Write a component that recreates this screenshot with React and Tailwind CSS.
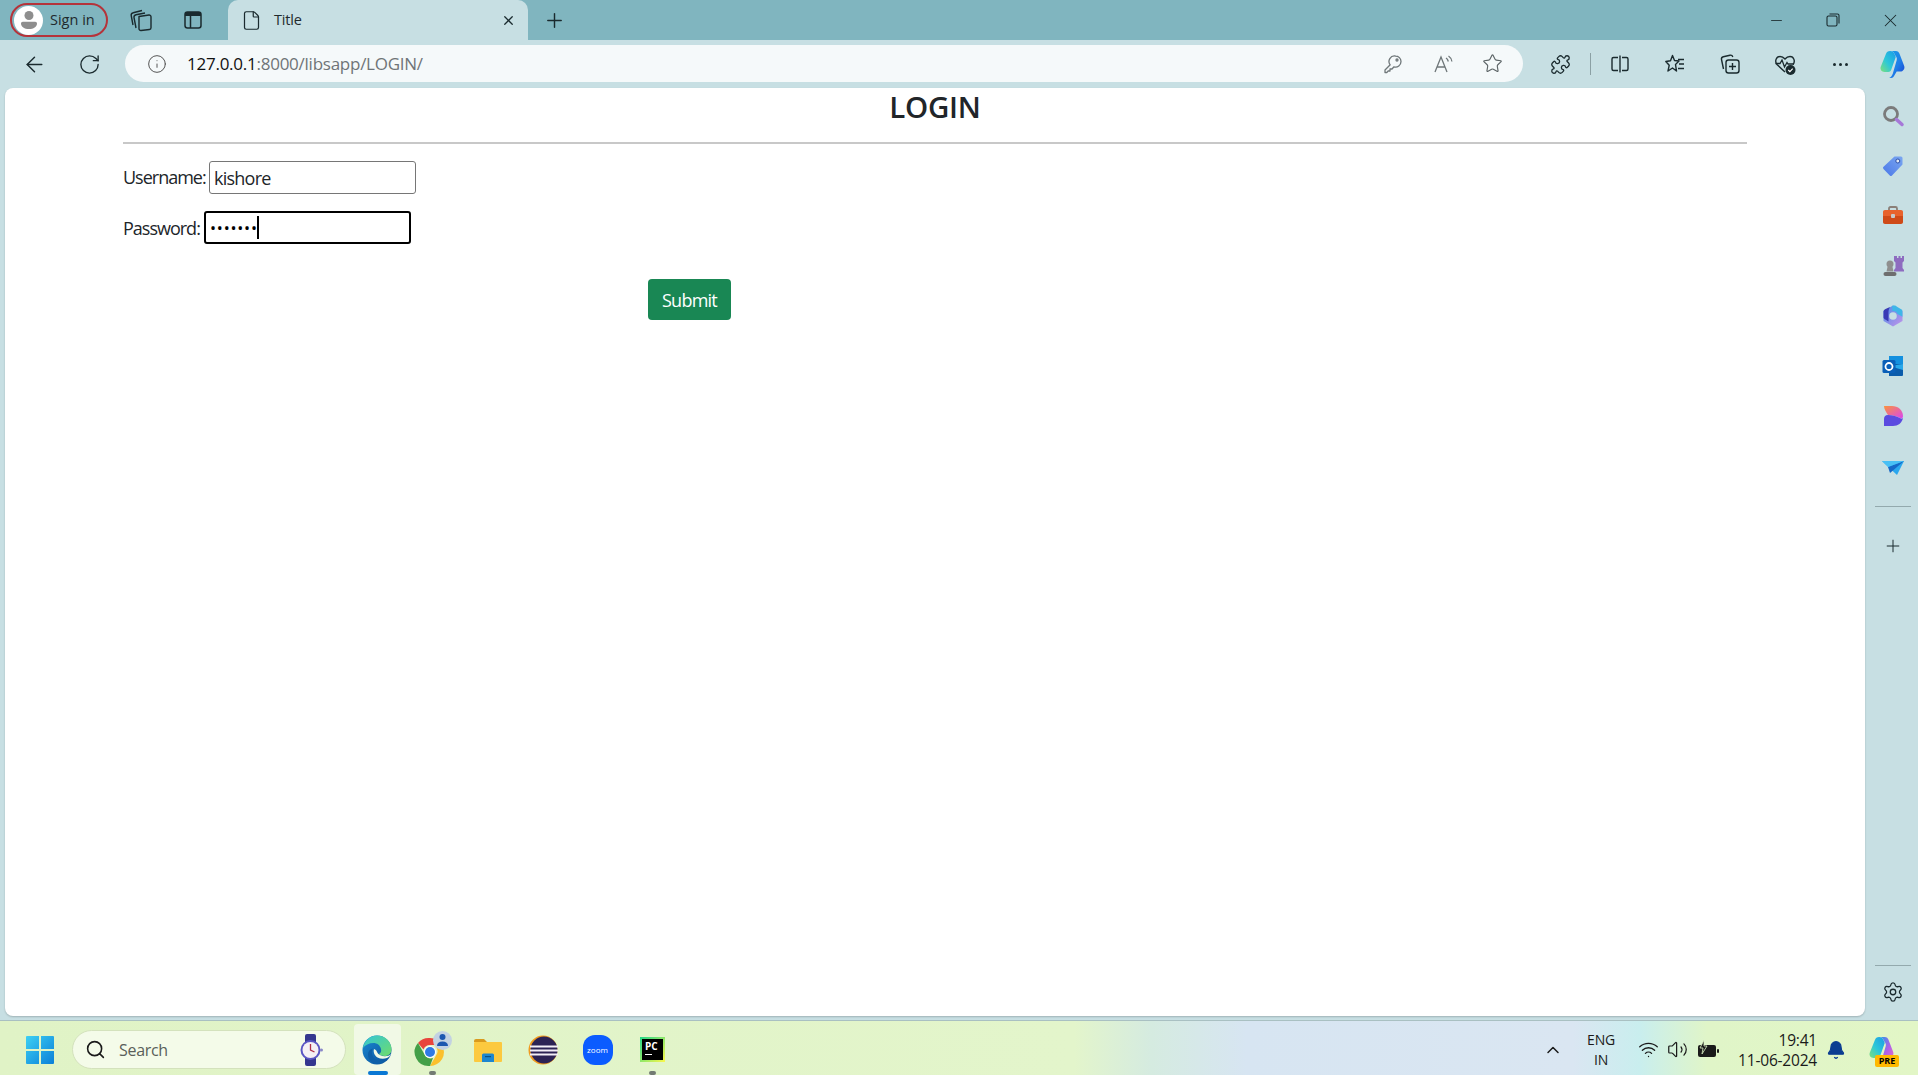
import React from "react";
import { ArrowLeft, RotateCw, Info, Star, Puzzle, Search, Plus, X, Minus, Settings, ChevronUp, Wifi, Volume2, Bell, File } from "lucide-react";

const font = "font-['Open_Sans','Noto_Sans',sans-serif]";

function Slot({ w = "w-[46px]", children, className = "" }) {
  return <div className={`${w} h-full flex items-center justify-center shrink-0 ${className}`}>{children}</div>;
}

function Copilot({ size = 30, id = "cp", right = ["#1aa0e8", "#1f7ee8", "#1a3fd0"] }) {
  return (
    <svg width={size} height={size} viewBox="0 0 32 32">
      <defs>
        <linearGradient id={`${id}a`} x1="0" y1="0" x2="1" y2="1"><stop offset="0" stopColor={right[0]} /><stop offset=".55" stopColor={right[1]} /><stop offset="1" stopColor={right[2]} /></linearGradient>
        <linearGradient id={`${id}b`} x1="0" y1="1" x2="1" y2="0"><stop offset="0" stopColor="#7fe07a" /><stop offset=".45" stopColor="#2cc8d8" /><stop offset="1" stopColor="#1a9ae8" /></linearGradient>
      </defs>
      <path d="M14 2h6c2.200 0 3.400 1.200 4 3l5 13c1 3-1 6-4.500 6H21l-3 5c-1 1.500-2.400 2-4 2h-1c2-1 3-2.500 3.800-4.500L21 12c.6-2-.2-3.500-1.500-5L18 4c-.7-1.300-2.400-2-4-2z" fill={`url(#${id}a)`} />
      <path d="M14 2c-2.400 0-3.800 1.300-4.500 3.400L4 19c-1 3 1 5.500 4 5.500h4c1.500 0 2.600-.8 3.200-2.400L20 8.500 18.500 5C17.700 3 16 2 14 2z" fill={`url(#${id}b)`} />
    </svg>
  );
}

function Workspaces() {
  return (
    <svg width="24" height="24" viewBox="0 0 24 24" fill="none" stroke="#1a2a2e" strokeWidth="1.400" strokeLinejoin="round">
      <path d="M10 8.500 20 7a1.800 1.800 0 0 1 2 1.700v11a1.800 1.800 0 0 1-1.600 1.800L12 22.500a1.800 1.800 0 0 1-2-1.800z" />
      <path d="M7 20 5 9.500C4.800 8 5.500 7 7 6.700L16 5" />
      <path d="M4 17 2.200 7.500C2 6 2.800 5 4.200 4.700L13 2.500" />
    </svg>
  );
}

function TabActions() {
  return (
    <svg width="20" height="20" viewBox="0 0 20 20" fill="none">
      <rect x="2" y="2" width="16" height="16" rx="2.500" stroke="#1a2a2e" strokeWidth="1.500" />
      <path d="M2 4.500A2.500 2.500 0 0 1 4.500 2h11A2.500 2.500 0 0 1 18 4.500V6H2z" fill="#1a2a2e" />
      <path d="M7.500 6v12" stroke="#1a2a2e" strokeWidth="1.500" />
    </svg>
  );
}

function SplitIcon() {
  return (
    <svg width="20" height="20" viewBox="0 0 20 20" fill="none" stroke="#1a2a2e" strokeWidth="1.400">
      <path d="M8 3.500H3.500A1.500 1.500 0 0 0 2 5v10a1.500 1.500 0 0 0 1.500 1.500H8" />
      <path d="M12 3.500h4.500A1.500 1.500 0 0 1 18 5v10a1.500 1.500 0 0 1-1.500 1.500H12" />
      <path d="M10 1.500v17" />
    </svg>
  );
}

function FavList() {
  return (
    <svg width="22" height="22" viewBox="0 0 22 22" fill="none" stroke="#1a2a2e" strokeWidth="1.400" strokeLinejoin="round">
      <path d="M8.500 2.500 10.500 7.500 15 8 11.500 11.500 12.500 18 8.500 15 4 18 5.200 12.300 1.800 8.500 6.500 7.800z" />
      <path d="M14 6.500h6M15 11h5M14 15.500h6" />
    </svg>
  );
}

function Collections() {
  return (
    <svg width="22" height="22" viewBox="0 0 22 22" fill="none" stroke="#1a2a2e" strokeWidth="1.400">
      <rect x="7" y="7" width="13" height="13" rx="2.500" />
      <path d="M13.500 10v7M10 13.500h7" />
      <path d="M4.500 16 2.500 6.500C2.200 5 3 4 4.300 3.700L11 2.200c1.400-.3 2.400.4 2.800 1.800" />
    </svg>
  );
}

function Health() {
  return (
    <svg width="24" height="24" viewBox="0 0 24 24" fill="none">
      <path d="M12 20 4 12.500C1.500 9.500 3 4.500 7 4.500c2.200 0 3.700 1 5 2.500 1.300-1.500 2.800-2.500 5-2.500 4 0 5.500 5 3 8" stroke="#1a2a2e" strokeWidth="1.400" />
      <path d="M2.500 11.500H7L9 8l2.500 7L14 10.500l1 1.500h6" stroke="#1a2a2e" strokeWidth="1.300" />
      <circle cx="17.500" cy="18" r="5" fill="#1a2a2e" />
      <path d="m15.300 18 1.600 1.600 2.800-3" stroke="#fff" strokeWidth="1.200" />
    </svg>
  );
}

function ReadAloud() {
  return (
    <svg width="22" height="22" viewBox="0 0 22 22" fill="none" stroke="#6f7779" strokeWidth="1.300">
      <path d="M2 19 8 4l6 15M4.200 14h7.600" />
      <path d="M13 5c1.300.8 2 2 2.300 3.500M15.500 3c1.900 1.200 3 3 3.400 5.500" />
    </svg>
  );
}

function KeyIcon() {
  return (
    <svg width="20" height="20" viewBox="0 0 20 20" fill="none" stroke="#6f7779" strokeWidth="1.300" strokeLinejoin="round">
      <path d="M12.500 2a5.500 5.500 0 0 1 5.500 5.500 5.500 5.500 0 0 1-7 5.300L9 15H7v2H5l-1 1.500H2v-2.500l5.200-5.200A5.500 5.500 0 0 1 12.500 2z" />
      <circle cx="14" cy="6" r="1" />
    </svg>
  );
}

function Avatar() {
  return (
    <div className="w-[29px] h-[29px] rounded-full bg-white flex items-center justify-center shrink-0">
      <svg width="20" height="22" viewBox="0 0 20 22">
        <circle cx="10" cy="6.500" r="4.500" fill="#8e8e8e" />
        <path d="M2 14.500c0-1 .8-1.800 1.800-1.800h12.400c1 0 1.800.8 1.800 1.800 0 3.500-3.500 5.500-8 5.500s-8-2-8-5.500z" fill="#8e8e8e" />
      </svg>
    </div>
  );
}

const sidebarIcons = [
  <svg width="24" height="24" viewBox="0 0 24 24" fill="none"><circle cx="10" cy="10" r="6.500" stroke="#7b7b7b" strokeWidth="2.800" /><path d="m15.500 15.500 5.500 5" stroke="#a678d8" strokeWidth="3.500" strokeLinecap="round" /></svg>,
  <svg width="24" height="24" viewBox="0 0 24 24"><defs><linearGradient id="sbt" x1="0" y1="1" x2="1" y2="0"><stop offset="0" stopColor="#4a78e8" /><stop offset="1" stopColor="#7aa6f0" /></linearGradient></defs><path d="M13.500 2.500H20a1.500 1.500 0 0 1 1.500 1.500v6.500L11 21.500a1.500 1.500 0 0 1-2.200 0L2.500 15a1.500 1.500 0 0 1 0-2.200z" fill="url(#sbt)" /><circle cx="16.800" cy="7" r="2" fill="#dfe8f6" stroke="#2c4fa8" /></svg>,
  <svg width="24" height="24" viewBox="0 0 24 24"><path d="M8 6V4.500A1.500 1.500 0 0 1 9.500 3h5A1.500 1.500 0 0 1 16 4.500V6" fill="none" stroke="#8a7f78" strokeWidth="1.800" /><path d="M2 8c0-1.200.8-2 2-2h16c1.200 0 2 .8 2 2v4H2z" fill="#e8622c" /><path d="M2 12h20v6c0 1.200-.8 2-2 2H4c-1.200 0-2-.8-2-2z" fill="#cf4a18" /><rect x="10" y="10" width="4" height="4" rx="1" fill="#c8c8c8" /></svg>,
  <svg width="24" height="24" viewBox="0 0 24 24"><circle cx="9" cy="10" r="3.500" fill="#8f8f8f" /><path d="M6.500 13h5l1 4.500h-7z" fill="#8f8f8f" /><rect x="2.500" y="18" width="13" height="4" rx="2" fill="#6e6e6e" /><path d="M14 2h2v2h1.500V2h2v2H21V2h2v5l-1.500 1.500V14l1.500 2v1.500H13V16l1.500-2V8.500L13 7V2z" fill="#8e6cc0" /></svg>,
  <svg width="24" height="24" viewBox="0 0 24 24" fill="none"><defs><linearGradient id="m365" x1="0" y1="0" x2="1" y2="1"><stop offset="0" stopColor="#4a8fe8" /><stop offset="1" stopColor="#c493ea" /></linearGradient></defs><path d="M12 1.500 21.500 7v10L12 22.500 2.500 17V7z" fill="url(#m365)" /><path d="M11 1.900c2.500-.8 4 0 5 .8l5 3c.6.6.5 5.300.5 7l-5-2.700c-.4-2-2.500-3.500-5-3z" fill="#3fb6e8" /><path d="M2.500 7.500c0-1 1-1.800 2-2.400L9 3c-1 2-1.500 3-1.500 5v9.500L3.500 15c-.7-.5-1-1-1-2z" fill="#3a3ab5" /><circle cx="12" cy="12" r="3.800" fill="#c7dfe3" /></svg>,
  <svg width="24" height="24" viewBox="0 0 24 24"><rect x="8" y="2" width="14" height="10" fill="#1490df" /><path d="M8 10h14v11a1 1 0 0 1-1 1H8z" fill="#0b5cab" /><path d="m8 12 14-2v6z" fill="#28a8ea" /><rect x="1.500" y="6" width="13" height="13" rx="1.500" fill="#0a5fb8" /><circle cx="8" cy="12.500" r="3.500" fill="none" stroke="#fff" strokeWidth="1.800" /></svg>,
  <svg width="24" height="24" viewBox="0 0 24 24"><defs><linearGradient id="dsg" x1="0" y1="0" x2="1" y2="1"><stop offset="0" stopColor="#fb923c" /><stop offset="1" stopColor="#d946ef" /></linearGradient></defs><path d="M3 2h8c6 0 11 4 11 10 0 2-1 3-3 2-3-2-9-3-12-3-2-3-4-6-4-9z" fill="url(#dsg)" /><path d="M3 22h9c5 0 9-3 10-8-1 1-2 1-3 0-4-2-8-3-12-3-3 0-4 2-4 4z" fill="#5b4be0" /></svg>,
  <svg width="24" height="24" viewBox="0 0 24 24"><path d="M1 7h22L16 21z" fill="#2aa7ee" /><path d="M23 7 7 13l2 6z" fill="#1668c7" /><path d="M1 7l6 6 16-6z" fill="#49c0f5" /></svg>,
];

function Edge() {
  return (
    <svg width="32" height="32" viewBox="0 0 32 32">
      <defs>
        <linearGradient id="edA" x1="0" y1="0" x2="1" y2="1"><stop offset="0" stopColor="#33c6d8" /><stop offset="1" stopColor="#6fdc6b" /></linearGradient>
        <linearGradient id="edB" x1="0" y1="0" x2="1" y2="1"><stop offset="0" stopColor="#1a8ad4" /><stop offset="1" stopColor="#0c4f98" /></linearGradient>
      </defs>
      <circle cx="16" cy="16" r="14.500" fill="url(#edB)" />
      <path d="M2 14C3 7 9 1.500 16 1.500c8 0 14.500 6 14.500 14 0 4-3 6.500-7 6.500-3 0-5-1-5.500-2 2-1 2.500-3 2-5C19 11 16 9 12.500 9 8 9 4 11 2 14z" fill="url(#edA)" />
      <path d="M12 14.500c-2 2.500-1.500 7 2 10.500 3 2.500 8 2.500 12 0-3 3.500-7 5.500-11 5-5-1-8-5-8-9.500 0-3 2-5.500 5-6z" fill="#0e5fa8" />
      <path d="M13 15c-1 3 .5 6.500 3.500 8.500 3 1.500 6.500 1.500 9.500.5 2-1 3-2 4-4-1.500 1.500-3.500 2.200-6 2.200-4 0-7-1.700-8-4.200-.6-1.300-.5-2-3-3z" fill="#f1f9e6" />
    </svg>
  );
}

function Chrome() {
  return (
    <div className="relative w-[38px] h-[38px]">
      <svg width="32" height="32" viewBox="0 0 32 32" className="absolute left-0 top-[5px]">
        <path d="M16 2a14 14 0 0 1 12.100 7H16a7 7 0 0 0-6.500 4.500L4 7a14 14 0 0 1 12-5z" fill="#e8453c" />
        <path d="M28.100 9A14 14 0 0 1 16 30l6-10.500A7 7 0 0 0 22 11z" fill="#fbc02d" />
        <path d="M4 7l6 10.500A7 7 0 0 0 19 22l-3 8A14 14 0 0 1 4 7z" fill="#43a047" />
        <circle cx="16" cy="16" r="6" fill="#fff" />
        <circle cx="16" cy="16" r="5" fill="#2f7ae5" />
      </svg>
      <div className="absolute right-0 top-0 w-[19px] h-[19px] rounded-full bg-[#c3d2e2] flex items-center justify-center">
        <svg width="13" height="14" viewBox="0 0 13 14"><circle cx="6.500" cy="4" r="3" fill="#1c57b0" /><path d="M1 13c0-3 2-4.500 5.500-4.500S12 10 12 13z" fill="#1c57b0" /></svg>
      </div>
    </div>
  );
}

function Folder() {
  return (
    <svg width="30" height="30" viewBox="0 0 30 30">
      <path d="M1 6a2 2 0 0 1 2-2h8l3 3H1z" fill="#d99a1e" />
      <rect x="1" y="7" width="28" height="20" rx="1" fill="#fcc93f" />
      <path d="M9 27v-7a1.500 1.500 0 0 1 1.500-1.500h9A1.500 1.500 0 0 1 21 20v7z" fill="#1d86cf" />
      <rect x="12" y="21" width="6" height="1.200" fill="#0b4f86" />
    </svg>
  );
}

function Eclipse() {
  return (
    <svg width="30" height="30" viewBox="0 0 30 30">
      <circle cx="15" cy="15" r="14.500" fill="#f09a1f" />
      <circle cx="16" cy="15" r="13.500" fill="#2c2255" />
      <rect x="2" y="10.500" width="28" height="2" fill="#f3eef7" />
      <rect x="2" y="14.500" width="28" height="2" fill="#f3eef7" />
      <rect x="2" y="18.500" width="28" height="2" fill="#f3eef7" />
    </svg>
  );
}

function Zoom() {
  return (
    <div className={`w-[30px] h-[30px] rounded-[12px] bg-[#0b5cff] flex items-center justify-center text-white text-[8px] leading-none ${font}`}>zoom</div>
  );
}

function PyCharm() {
  return (
    <div className="w-[25px] h-[25px] p-[2px] bg-[linear-gradient(135deg,#21d789,#fcf84a)]">
      <div className={`w-full h-full bg-black text-white text-[10px] leading-[10px] font-bold pt-[2px] pl-[3px] ${font}`}>
        PC
        <div className="w-[7px] h-[1px] bg-white mt-[3px]" />
      </div>
    </div>
  );
}

function Watch() {
  return (
    <svg width="26" height="32" viewBox="0 0 26 32">
      <rect x="7" y="0" width="11" height="32" rx="2" fill="#34368f" />
      <circle cx="12.500" cy="16" r="10" fill="#5a55c4" />
      <circle cx="12.500" cy="16" r="8" fill="#f5f0f5" />
      <path d="M12.500 10v6l4 2" stroke="#b0304a" strokeWidth="1.300" fill="none" />
      <circle cx="23.500" cy="16" r="1.500" fill="#8a88c8" />
    </svg>
  );
}

function Windows() {
  return (
    <svg width="30" height="30" viewBox="0 0 30 30">
      <defs><linearGradient id="wn" x1="0" y1="0" x2="1" y2="1"><stop offset="0" stopColor="#3dd0f3" /><stop offset="1" stopColor="#0a7fd8" /></linearGradient></defs>
      <path d="M1 2a1 1 0 0 1 1-1h12v13H1zM16 1h12a1 1 0 0 1 1 1v12H16zM1 16h13v13H2a1 1 0 0 1-1-1zM16 16h13v12a1 1 0 0 1-1 1H16z" fill="url(#wn)" />
    </svg>
  );
}

export default function App() {
  return (
    <div className={`w-[1918px] h-[1075px] flex flex-col overflow-hidden bg-[#c7dfe3] text-[#1a1a1a] ${font}`}>
      {/* title bar */}
      <div className="h-[40px] shrink-0 bg-[#80b5bf] flex items-stretch pl-[10px]">
        <div className="w-[98px] h-[34px] mt-[3px] rounded-full border-2 border-[#b5333a] flex items-center pl-[2px] gap-[7px] shrink-0">
          <Avatar />
          <span className="text-[14.500px] tracking-[0px] text-[#1f2a2d]">Sign in</span>
        </div>
        <Slot w="w-[66px]"><Workspaces /></Slot>
        <Slot w="w-[38px]"><TabActions /></Slot>
        <div className="w-[300px] ml-[16px] mt-0 rounded-t-[10px] bg-[#c7dfe3] flex items-center pl-[13px] shrink-0">
          <File size={21} strokeWidth={1.400} className="text-[#1a2a2e]" />
          <span className="ml-[12px] text-[14.500px] tracking-[-0.2px] text-[#1f2a2d]">Title</span>
          <X size={15} strokeWidth={2} className="ml-auto mr-[12px] text-[#1a2a2e]" />
        </div>
        <Slot w="w-[52px]"><Plus size={23} strokeWidth={1.500} className="text-[#1a2a2e]" /></Slot>
        <div className="flex-1" />
        <Slot w="w-[56px]"><Minus size={17} strokeWidth={1.200} className="text-[#1a2a2e]" /></Slot>
        <Slot w="w-[56px]" className="pl-[2px]">
          <svg width="14" height="14" viewBox="0 0 14 14" fill="none" stroke="#1a2a2e" strokeWidth="1.100"><rect x="1" y="3" width="10" height="10" rx="1.500" /><path d="M3.500 1H11.500A1.500 1.500 0 0 1 13 2.500V10.500" /></svg>
        </Slot>
        <Slot w="w-[58px]" className="pl-[2px]"><X size={21} strokeWidth={1.200} className="text-[#1a2a2e]" /></Slot>
      </div>

      {/* toolbar */}
      <div className="h-[48px] shrink-0 flex items-stretch pl-[10px]">
        <Slot w="w-[48px]" className="pl-[1px]"><ArrowLeft size={25} strokeWidth={1.400} className="text-[#1a2a2e]" /></Slot>
        <Slot w="w-[48px]" className="ml-[7px] pl-[1px]"><RotateCw size={23} strokeWidth={1.400} className="text-[#1a2a2e]" /></Slot>
        <div className="w-[1398px] h-[37px] mt-[5px] ml-[12px] rounded-full bg-[#f5f9fa] flex items-center shrink-0">
          <Info size={20} strokeWidth={1.200} className="ml-[22px] text-[#555]" />
          <span className="ml-[20px] text-[17px] tracking-[-0.25px] leading-none text-[#111]">127.0.0.1<span className="text-[#6f7477]">:8000/libsapp/LOGIN/</span></span>
          <div className="flex-1" />
          <KeyIcon />
          <div className="ml-[30px]"><ReadAloud /></div>
          <Star size={21} strokeWidth={1.300} className="ml-[27px] mr-[20px] text-[#5c6466]" />
        </div>
        <Slot className="ml-[14px]"><Puzzle size={21} strokeWidth={1.500} className="text-[#1a2a2e]" /></Slot>
        <div className="w-px h-[22px] self-center ml-[7px] bg-[#8ba0a4]" />
        <Slot className="ml-[6px]"><SplitIcon /></Slot>
        <Slot className="ml-[9px]"><FavList /></Slot>
        <Slot className="ml-[9px]"><Collections /></Slot>
        <Slot className="ml-[9px]"><Health /></Slot>
        <Slot className="ml-[9px]">
          <div className="flex gap-[3px]"><i className="w-[3px] h-[3px] rounded-full bg-[#1a2a2e]" /><i className="w-[3px] h-[3px] rounded-full bg-[#1a2a2e]" /><i className="w-[3px] h-[3px] rounded-full bg-[#1a2a2e]" /></div>
        </Slot>
        <Slot className="ml-[6px]"><Copilot id="cptop" /></Slot>
      </div>

      {/* content */}
      <div className="flex-1 flex items-stretch min-h-0 pl-[5px] border-b border-[#a9c0c2]">
        <div className="w-[1860px] mb-[4px] bg-white rounded-[8px] shadow-[0_1px_2px_rgba(0,0,0,0.2)] pl-[118px] text-[18px] tracking-[-0.75px] text-[#212529]">
          <div className="w-[1624px]">
            <h1 className="h-[37px] text-center text-[29.500px] leading-[37px] font-semibold tracking-[-0.3px]">LOGIN</h1>
            <hr className="mt-[17px] border-t-2 border-[#c8c8c8]" />
            <div className="flex items-center mt-[17px] h-[33px]">
              <label className="w-[86px] shrink-0 tracking-[-1px]">Username:</label>
              <input readOnly value="kishore" className="w-[207px] h-[33px] px-[4px] border border-[#767676] rounded-[3px] outline-none bg-white text-[#212529]" />
            </div>
            <div className="flex items-center mt-[17px] h-[33px]">
              <label className="w-[81px] shrink-0 pt-[2px] tracking-[-1px]">Password:</label>
              <div className="relative">
                <input readOnly type="password" value="1234567" className="w-[207px] h-[33px] px-[4px] border-2 border-black rounded-[3px] outline-none bg-white text-[16px] tracking-[0.8px] text-black" />
                <div className="absolute left-[53px] top-[5px] w-[2px] h-[23px] bg-black" />
              </div>
            </div>
            <div className="mt-[35px] pl-[525px]">
              <button className="w-[83px] h-[41px] rounded-[4px] bg-[#198754] text-white pt-[1px]">Submit</button>
            </div>
          </div>
        </div>

        <div className="w-[53px] flex flex-col items-center shrink-0 pl-[2px]">
          <div className="mt-[3px] flex flex-col items-center">
            {sidebarIcons.map((ic, i) => (
              <div key={i} className="h-[50px] w-full flex items-center justify-center">{ic}</div>
            ))}
          </div>
          <div className="mt-[15px] w-[36px] h-px bg-[#93a9ad]" />
          <div className="mt-[19px] h-[40px] flex items-center"><Plus size={20} strokeWidth={1.200} className="text-[#1a2a2e]" /></div>
          <div className="flex-1" />
          <div className="w-[36px] h-px bg-[#93a9ad]" />
          <div className="mt-[6px] mb-[8px] h-[40px] flex items-center"><Settings size={22} strokeWidth={1.400} className="text-[#1a2a2e]" /></div>
        </div>
      </div>

      {/* taskbar */}
      <div className="h-[54px] shrink-0 flex items-center pt-[3px] pl-[25px] text-[#1a1a1a] bg-[linear-gradient(to_right,#e0f3c6_0%,#e3f5cb_56%,#d5ebe0_60%,#d7e5f2_65%,#dae6f2_82%,#c9eeee_85.500%,#e0f5c8_89%,#e2f6c6_100%)]">
        <Windows />
        <div className="w-[274px] h-[39px] ml-[17px] rounded-full bg-[#f4fbe9] border border-[#d4e2bd] flex items-center pl-[12px] pr-[21px] shrink-0">
          <Search size={21} strokeWidth={1.800} className="text-[#1a1a1a]" />
          <span className="ml-[13px] text-[16px] tracking-[-0.3px] text-[#5a5f5a]">Search</span>
          <div className="flex-1" />
          <Watch />
        </div>
        <div className="relative w-[47px] h-[51px] ml-[8px] rounded-[4px] bg-[#f1f9e6] flex items-center justify-center shrink-0 pr-[2px]">
          <Edge />
          <div className="absolute bottom-0 left-[14px] w-[20px] h-[4px] rounded-full bg-[#0a78d4]" />
        </div>
        <div className="relative w-[55px] h-[51px] ml-[4px] flex items-center justify-center shrink-0">
          <Chrome />
          <div className="absolute bottom-0 left-[24px] w-[7px] h-[4px] rounded-full bg-[#737b73]" />
        </div>
        <Slot w="w-[55px]"><Folder /></Slot>
        <Slot w="w-[55px]"><Eclipse /></Slot>
        <Slot w="w-[55px]"><Zoom /></Slot>
        <div className="relative w-[55px] h-[51px] flex items-center justify-center shrink-0">
          <PyCharm />
          <div className="absolute bottom-0 left-[24px] w-[7px] h-[4px] rounded-full bg-[#737b73]" />
        </div>
        <div className="flex-1" />
        <ChevronUp size={20} strokeWidth={1.800} className="text-[#1a1a1a]" />
        <div className="w-[60px] ml-[8px] text-center text-[14px] leading-[20px] tracking-[-0.2px]">ENG<br />IN</div>
        <Wifi size={21} strokeWidth={1.500} className="ml-[7px]" />
        <Volume2 size={21} strokeWidth={1.400} className="ml-[8px]" />
        <svg width="24" height="20" viewBox="0 0 24 20" className="ml-[9px]"><rect x="1" y="5" width="18" height="12" rx="2" fill="#1a1a1a" /><rect x="20" y="9" width="2" height="4" rx="1" fill="#1a1a1a" /><path d="M7 0 3 8h3l-1 6 5-8H7z" fill="#1a1a1a" stroke="#e0f5c8" strokeWidth=".8" /></svg>
        <div className="w-[96px] text-right text-[15.500px] leading-[20px] tracking-[-0.2px]">19:41<br />11-06-2024</div>
        <Bell size={20} fill="#0b3d91" strokeWidth={1.500} className="ml-[9px] text-[#0b3d91]" />
        <div className="relative w-[30px] h-[30px] ml-[20px] mr-[22px]">
          <Copilot id="cpbot" right={["#1aa0e8", "#b060e8", "#f070c0"]} />
          <div className={`absolute left-[9px] -bottom-[2px] w-[24px] h-[12px] rounded-[2px] bg-[#ffb900] text-[9px] leading-[12px] font-bold text-center text-black ${font}`}>PRE</div>
        </div>
      </div>
    </div>
  );
}
